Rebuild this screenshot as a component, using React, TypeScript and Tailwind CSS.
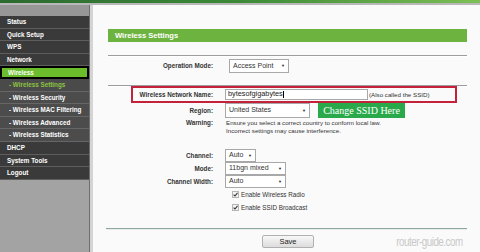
const menu = [
  { label: 'Status', kind: 'main' },
  { label: 'Quick Setup', kind: 'main' },
  { label: 'WPS', kind: 'main' },
  { label: 'Network', kind: 'main' },
  { label: 'Wireless', kind: 'active' },
  { label: '- Wireless Settings', kind: 'subActive' },
  { label: '- Wireless Security', kind: 'sub' },
  { label: '- Wireless MAC Filtering', kind: 'sub' },
  { label: '- Wireless Advanced', kind: 'sub' },
  { label: '- Wireless Statistics', kind: 'sub' },
  { label: 'DHCP', kind: 'main' },
  { label: 'System Tools', kind: 'main' },
  { label: 'Logout', kind: 'main' },
];

const itemClass: Record<string, string> = {
  main: 'bg-[#3a3a3a] text-white pl-[7px] border-b border-[#5e5e5e]',
  active: 'bg-[#6cbd2c] text-white pl-[6px] border-2 border-black',
  subActive: 'bg-[#4a4a4a] text-[#8cc540] pl-[9px] border-b border-[#666]',
  sub: 'bg-[#4c4c4c] text-white pl-[9px] border-b border-[#666]',
};

const Select = ({ value, width, className = '' }: { value: string; width: string; className?: string }) => (
  <div
    className={`flex items-center justify-between h-full bg-white border border-[#a8a8a8] pl-[3px] pr-[3px] text-[7px] text-[#333] ${width} ${className}`}
  >
    <span>{value}</span>
    <span className="text-[4px] text-[#222]">▼</span>
  </div>
);

const Check = () => (
  <svg width="7" height="7" viewBox="0 0 7 7" className="shrink-0">
    <rect x="0.5" y="0.5" width="6" height="6" fill="#f4f4f4" stroke="#b5b5b5" />
    <path d="M1.6 3.6 L3 5 L5.5 1.8" fill="none" stroke="#333" strokeWidth="1.1" />
  </svg>
);

const Row = ({ label, children, h }: { label: string; children: React.ReactNode; h: string }) => (
  <div className={`flex items-center ${h}`}>
    <div className="w-[105px] text-right font-bold text-[6.3px] text-[#333]">{label}</div>
    <div className="ml-[12px] flex items-center h-full">{children}</div>
  </div>
);

export default function App() {
  return (
    <div className="w-[480px] h-[252px] flex flex-col overflow-hidden bg-[#fafafa] font-['Liberation_Sans',Arial,sans-serif]">
      <div className="h-[3px] bg-gradient-to-r from-[#2c6a30] via-[#3c8a38] to-[#7cbf55]" />
      <div className="h-[2px] bg-[#b8b8b8]" />
      <div className="flex flex-1">
        {/* sidebar */}
        <aside className="w-[89px] flex flex-col bg-[#a3a3a3]">
          <div className="h-[11px] bg-[#979797]" />
          {menu.map((m) => (
            <div
              key={m.label}
              className={`h-[12.6px] flex items-center font-bold text-[6.3px] whitespace-nowrap ${itemClass[m.kind]}`}
            >
              {m.label}
            </div>
          ))}
        </aside>
        <div className="w-[4px] border-l border-[#6e6e6e] bg-[#d4d4d4]" />

        {/* content */}
        <main className="flex-1 flex flex-col pl-[15px] pr-[13px]">
          <div className="mt-[24px] h-[13px] bg-[#6db33f] flex items-center pl-[7px] text-white font-bold text-[7.6px]">
            Wireless Settings
          </div>
          <div className="mt-[13px] h-[2px] border-t border-[#9d9d9d] bg-white" />

          <div className="mt-[2px]">
            <Row label="Operation Mode:" h="h-[14px]">
              <Select value="Access Point" width="w-[60px]" className="ml-[4px]" />
            </Row>
          </div>

          <div className="mt-[12px] h-[2px] border-t border-[#9d9d9d] bg-white" />

          <div className="relative mt-[2px]">
            <div className="absolute left-[23px] right-[10px] -top-[3px] -bottom-[3px] border-2 border-[#c4213a]" />
            <Row label="Wireless Network Name:" h="h-[11px]">
              <div className="h-full w-[143px] bg-white border border-[#a8a8a8] pl-[2px] text-[7.3px] text-[#222] flex items-center">
                bytesofgigabytes<span className="w-[1px] h-[7px] bg-black" />
              </div>
              <span className="ml-[1px] text-[6.2px] text-[#333]">(Also called the SSID)</span>
            </Row>
          </div>

          <div className="mt-[3px]">
            <Row label="Region:" h="h-[15px]">
              <Select value="United States" width="w-[85px]" className="h-[14px]" />
              <div className="ml-[8px] h-[15px] w-[87px] bg-[#2aa94a] text-white text-[10px] font-['Liberation_Serif',serif] flex items-center justify-center">
                Change SSID Here
              </div>
            </Row>
          </div>

          <div className="flex mt-[1px]">
            <div className="w-[105px] text-right font-bold text-[6.3px] text-[#333] leading-[8px]">Warning:</div>
            <div className="ml-[13px] text-[6.2px] text-[#333] leading-[8px]">
              <div>Ensure you select a correct country to conform local law.</div>
              <div>Incorrect settings may cause interference.</div>
            </div>
          </div>

          <div className="mt-[14px]">
            <Row label="Channel:" h="h-[13px]">
              <Select value="Auto" width="w-[31px]" className="h-[12px]" />
            </Row>
            <Row label="Mode:" h="h-[13px]">
              <Select value="11bgn mixed" width="w-[61px]" className="h-[12px]" />
            </Row>
            <Row label="Channel Width:" h="h-[13px]">
              <Select value="Auto" width="w-[61px]" className="h-[12px]" />
            </Row>
            <Row label="" h="h-[13px]">
              <div className="ml-[7px] flex items-center gap-[2px] text-[6.3px] text-[#333]">
                <Check />
                <span>Enable Wireless Radio</span>
              </div>
            </Row>
            <Row label="" h="h-[13px]">
              <div className="ml-[7px] flex items-center gap-[2px] text-[6.3px] text-[#333]">
                <Check />
                <span>Enable SSID Broadcast</span>
              </div>
            </Row>
          </div>

          <div className="mt-[14px] -ml-[2px] h-[2px] border-t border-[#8fa7a2] bg-[#e6eeec]" />

          <div className="mt-[2px] flex items-center">
            <button className="ml-[154px] w-[52px] h-[13px] border border-[#b0b0b0] rounded-[2px] bg-gradient-to-b from-[#f8f8f8] to-[#dcdcdc] text-[7.5px] text-[#222]">
              Save
            </button>
            <span className="ml-auto mr-[4px] inline-block text-[13px] text-[#c8c8c8] tracking-[-0.6px] scale-x-75 origin-right">
              router-guide.com
            </span>
          </div>
        </main>
      </div>
    </div>
  );
}
